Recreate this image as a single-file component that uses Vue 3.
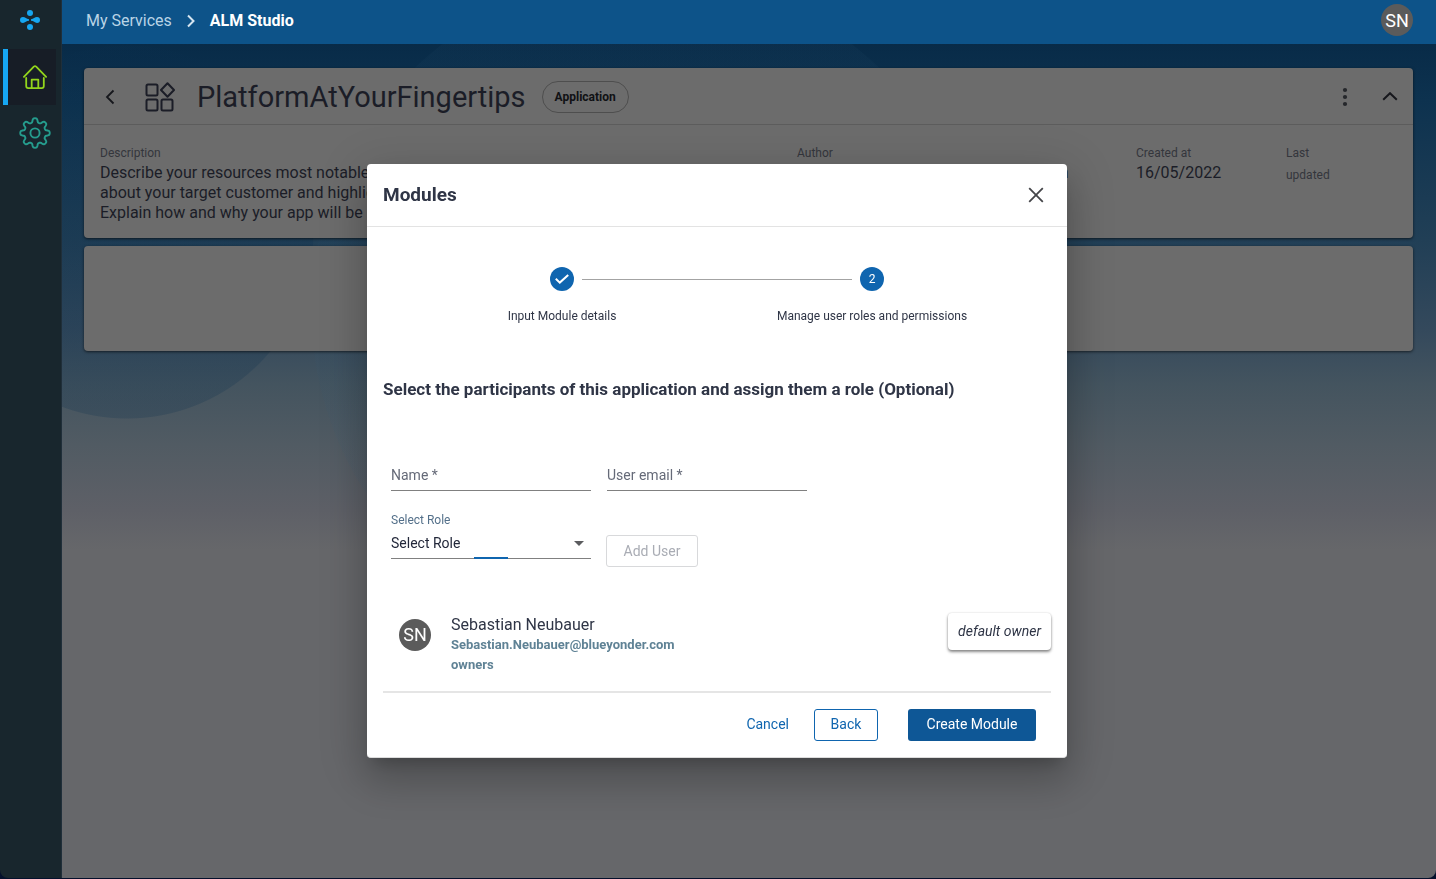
<script setup>
import { ref } from 'vue'

const name = ref('')
const email = ref('')
const role = ref('')

const gearPoints = []
for (let i = 0; i < 160; i++) {
  const a = (i / 160) * Math.PI * 2
  const r = 12.7 + 2.1 * Math.tanh(1.9 * Math.cos(8 * a))
  gearPoints.push(`${(16 + r * Math.cos(a)).toFixed(2)} ${(16 + r * Math.sin(a)).toFixed(2)}`)
}
const gearPath = `M${gearPoints.join('L')}Z`

const steps = [
  { id: 1, label: 'Input Module details', done: true },
  { id: 2, label: 'Manage user roles and permissions', done: false },
]
</script>

<template>
  <div class="app">
    <nav class="sidebar" aria-label="Main">
      <a class="logo" href="#" aria-label="Home page">
        <svg width="20" height="20" viewBox="0 0 20 20" fill="#16a6f0">
          <circle cx="10" cy="3" r="3" />
          <circle cx="10" cy="17" r="3" />
          <path d="M3 7C5.200 7 6.400 9.200 9 9.200V10.800C6.400 10.800 5.200 13 3 13A3 3 0 0 1 3 7Z" />
          <path d="M17 7C14.800 7 13.600 9.200 11 9.200V10.800C13.600 10.800 14.800 13 17 13A3 3 0 0 0 17 7Z" />
        </svg>
      </a>
      <a class="nav-item active" href="#" aria-label="Home">
        <svg width="24" height="24" viewBox="0 0 24 24" fill="none" stroke="#93d51c" stroke-width="1.800" stroke-linecap="round" stroke-linejoin="round">
          <path d="M0.900 11.800L10.800 1.600Q12 0.600 13.200 1.600L23.100 11.800" />
          <path d="M3.200 13V21Q3.200 23.100 5.300 23.100H18.700Q20.800 23.100 20.800 21V13" />
          <path d="M8.700 23V14.600H15.300V23" />
        </svg>
      </a>
      <a class="nav-item" href="#" aria-label="Settings">
        <svg width="32" height="32" viewBox="0 0 32 32" fill="none" stroke="#259c8d" stroke-width="1.900">
          <path :d="gearPath" stroke-linejoin="round" />
          <circle cx="16" cy="16" r="4.600" />
        </svg>
      </a>
    </nav>

    <div class="page">
      <header class="topbar">
        <nav class="crumbs" aria-label="Breadcrumb">
          <a href="#">My Services</a>
          <svg width="8" height="14" viewBox="0 0 8 14" fill="none" stroke="#d5e5f0" stroke-width="2"><path d="M1 1.500L6.500 7L1 12.500" /></svg>
          <strong>ALM Studio</strong>
        </nav>
        <button class="avatar" type="button">SN</button>
      </header>

      <main class="content">
        <section class="card">
          <div class="card-head">
            <button class="icon-btn back-btn" type="button" aria-label="Go back">
              <svg width="10" height="16" viewBox="0 0 10 16" fill="none" stroke="#16171c" stroke-width="1.800"><path d="M8.500 1.500L2 8L8.500 14.500" /></svg>
            </button>
            <svg class="app-icon" width="30" height="30" viewBox="0 0 30 30" fill="none" stroke="#1b1d27" stroke-width="2" stroke-linejoin="round">
              <rect x="1.500" y="2.500" width="11" height="11" rx="1.500" />
              <rect x="1.500" y="17.500" width="11" height="11" rx="1.500" />
              <rect x="16.500" y="17.500" width="11" height="11" rx="1.500" />
              <path d="M22.500 1.200L29 8L22.500 14.800L16 8Z" />
            </svg>
            <h1>PlatformAtYourFingertips</h1>
            <span class="tag">Application</span>
            <button class="icon-btn more-btn" type="button" aria-label="More actions">
              <svg width="6" height="20" viewBox="0 0 6 20" fill="#25272b"><circle cx="3" cy="3" r="2.100" /><circle cx="3" cy="10" r="2.100" /><circle cx="3" cy="17" r="2.100" /></svg>
            </button>
            <button class="icon-btn" type="button" aria-label="Collapse">
              <svg width="16" height="10" viewBox="0 0 16 10" fill="none" stroke="#16171c" stroke-width="2"><path d="M1.200 7.800L8 1.200L14.800 7.800" /></svg>
            </button>
          </div>
          <dl class="details">
            <div>
              <dt>Description</dt>
              <dd>Describe your resources most notable<br />about your target customer and highlight<br />Explain how and why your app will be</dd>
            </div>
            <div>
              <dt>Author</dt>
              <dd>Sebastian.Neubauer@blueyonder.com</dd>
            </div>
            <div>
              <dt>Created at</dt>
              <dd>16/05/2022</dd>
            </div>
            <div>
              <dt class="narrow">Last updated</dt>
            </div>
          </dl>
        </section>
        <section class="card empty" aria-label="Modules"></section>
      </main>
    </div>

    <div class="overlay">
      <div class="dialog" role="dialog" aria-labelledby="dialog-title">
        <header class="dialog-head">
          <h2 id="dialog-title">Modules</h2>
          <button class="icon-btn" type="button" aria-label="Close">
            <svg width="16" height="16" viewBox="0 0 16 16" fill="none" stroke="#444549" stroke-width="1.800"><path d="M1.200 1.200L14.800 14.800M14.800 1.200L1.200 14.800" /></svg>
          </button>
        </header>

        <ol class="stepper">
          <li v-for="step in steps" :key="step.id">
            <span class="dot">
              <svg v-if="step.done" width="14" height="10" viewBox="0 0 14 10" fill="none" stroke="#fff" stroke-width="2"><path d="M0.800 4.800L4.800 8.600L13.200 0.900" /></svg>
              <template v-else>{{ step.id }}</template>
            </span>
            <span class="step-label">{{ step.label }}</span>
          </li>
        </ol>

        <form class="form" @submit.prevent>
          <h3>Select the participants of this application and assign them a role (Optional)</h3>
          <div class="fields">
            <div class="field">
              <label v-show="!name" for="user-name">Name *</label>
              <input id="user-name" v-model="name" type="text" />
            </div>
            <div class="field">
              <label v-show="!email" for="user-email">User email *</label>
              <input id="user-email" v-model="email" type="email" />
            </div>
            <div class="role">
              <label for="user-role">Select Role</label>
              <div class="select-box">
                <select id="user-role" v-model="role">
                  <option value="">Select Role</option>
                </select>
                <svg width="10" height="5" viewBox="0 0 10 5" fill="#5b5c5f"><path d="M0 0H10L5 5Z" /></svg>
                <span class="ripple"></span>
              </div>
            </div>
            <button class="btn add" type="button" disabled>Add User</button>
          </div>
        </form>

        <div class="member">
          <span class="avatar">SN</span>
          <div class="person">
            <span class="person-name">Sebastian Neubauer</span>
            <strong>Sebastian.Neubauer@blueyonder.com</strong>
            <strong>owners</strong>
          </div>
          <em class="owner">default owner</em>
        </div>

        <footer class="actions">
          <button class="btn text" type="button">Cancel</button>
          <button class="btn outline" type="button">Back</button>
          <button class="btn primary" type="button">Create Module</button>
        </footer>
      </div>
    </div>
  </div>
</template>

<style>
body {
  background: #04102c;
}
</style>

<style scoped>
* {
  box-sizing: border-box;
}
.app {
  display: flex;
  min-height: calc(100vh - 1px);
  overflow: hidden;
  border-radius: 0 0 8px 8px;
  font-family: Roboto, "Liberation Sans", sans-serif;
  font-size: 16px;
  line-height: 20px;
  color: #2f3546;
}
h1, h2, h3, dl, dd, ol {
  margin: 0;
  padding: 0;
}
button {
  font-family: inherit;
  cursor: pointer;
}
svg {
  display: block;
}
.sidebar {
  width: 62px;
  flex: none;
  background: #18262d;
  border-right: 1px solid #202f3a;
}
.logo {
  display: flex;
  align-items: center;
  justify-content: center;
  width: 60px;
  height: 40px;
  margin-bottom: 9px;
}
.nav-item {
  display: flex;
  align-items: center;
  justify-content: center;
  width: 53px;
  height: 56px;
  margin-left: 3px;
  padding-left: 5px;
  border-left: 5px solid transparent;
}
.active {
  background: #171d26;
  border-color: #16a8f4;
}
.page {
  display: flex;
  flex: 1;
  flex-direction: column;
  min-width: 0;
}
.topbar {
  display: flex;
  align-items: center;
  justify-content: space-between;
  height: 44px;
  padding: 0 23px 4px 24px;
  background: #0d5389;
}
.crumbs {
  display: flex;
  align-items: center;
  gap: 15px;
  padding-top: 2px;
}
.crumbs a {
  color: #b9d4e6;
  text-decoration: none;
}
.crumbs strong {
  color: #fff;
}
.avatar {
  display: flex;
  align-items: center;
  justify-content: center;
  width: 32px;
  height: 32px;
  padding: 0;
  flex: none;
  border: 0;
  border-radius: 50%;
  background: #5b5b5b;
  color: #fff;
  font-size: 18px;
}
.content {
  display: flex;
  flex: 1;
  flex-direction: column;
  gap: 8px;
  padding: 24px 23px 24px 22px;
  background:
    radial-gradient(circle at 65px 188px, rgba(10, 46, 76, 0.220) 186px, transparent 187px),
    radial-gradient(circle at 585px 266px, rgba(50, 90, 120, 0.080) 335px, transparent 336px),
    linear-gradient(#082b48 0, #0d324f 56px, #213f56 196px, #34495c 286px, #44545f 341px, #515b63 401px, #5e6067 466px, #66676a 506px);
}
.card {
  border-radius: 4px;
  background: #6c6c6c;
  box-shadow: 0 1px 3px rgba(0, 0, 0, 0.600);
}
.empty {
  height: 105px;
}
.card-head {
  display: flex;
  align-items: center;
  height: 57px;
  padding: 2px 7px 0 0;
  border-bottom: 1px solid #5c5c5c;
}
.icon-btn {
  display: flex;
  align-items: center;
  justify-content: center;
  width: 32px;
  height: 32px;
  padding: 0;
  border: 0;
  background: none;
}
.back-btn {
  margin-left: 10px;
}
.app-icon {
  margin: 0 22px 0 19px;
}
h1 {
  font-size: 29px;
  font-weight: 400;
  line-height: 36px;
  color: #1b1d27;
}
.tag {
  display: flex;
  align-items: center;
  height: 32px;
  margin-left: 16px;
  padding: 0 12px;
  border: 1px solid #4e4e4e;
  border-radius: 16px;
  color: #101114;
  font-size: 12px;
  font-weight: 700;
}
.more-btn {
  margin: 0 13px 0 auto;
}
.details {
  display: grid;
  grid-template-columns: 697fr 339fr 150fr 111fr;
  height: 113px;
  padding: 17px 16px 0;
}
.details dt {
  font-size: 12px;
  line-height: 22px;
  color: #34363c;
}
.details dd {
  margin-top: -1px;
  color: #1b1d27;
}
.narrow {
  width: 50px;
}
.overlay {
  position: fixed;
  inset: 44px 2px 1px 0;
  display: flex;
  align-items: center;
  justify-content: center;
}
.dialog {
  width: 700px;
  max-width: 100%;
  padding-bottom: 16px;
  border-bottom: 1px solid #dcdcdc;
  border-radius: 4px;
  background: #fff;
  box-shadow: 0 11px 15px -7px rgba(0, 0, 0, 0.200), 0 24px 38px 3px rgba(0, 0, 0, 0.140), 0 9px 46px 8px rgba(0, 0, 0, 0.120);
}
.dialog-head {
  display: flex;
  align-items: center;
  justify-content: space-between;
  height: 63px;
  padding: 0 15px 0 16px;
  border-bottom: 1px solid #e3e3e3;
}
h2 {
  font-size: 19px;
  font-weight: 700;
}
.stepper {
  display: flex;
  padding: 40px 40px 0;
  list-style: none;
}
.stepper li {
  position: relative;
  display: flex;
  flex: 1;
  flex-direction: column;
  align-items: center;
  gap: 15px;
}
.stepper li + li::before {
  content: "";
  position: absolute;
  top: 12px;
  right: calc(50% + 20px);
  left: calc(-50% + 20px);
  border-top: 1px solid #a3a3a3;
}
.dot {
  display: flex;
  align-items: center;
  justify-content: center;
  width: 24px;
  height: 24px;
  border-radius: 50%;
  background: #0f65af;
  color: #fff;
  font-size: 12px;
}
.step-label {
  font-size: 12px;
}
.form {
  padding: 53px 16px 0;
}
h3 {
  font-size: 17px;
  font-weight: 700;
}
.fields {
  display: grid;
  grid-template-columns: 200px 200px;
  column-gap: 16px;
  padding: 61px 8px 0;
}
.field {
  display: grid;
  height: 31px;
}
.field label,
.field input {
  grid-area: 1 / 1;
}
.field label {
  padding-top: 5px;
  color: #656a78;
  font-size: 14px;
}
.field input {
  width: 100%;
  padding: 0;
  border: 0;
  border-bottom: 1px solid #808080;
  background: none;
  outline: none;
}
.role {
  padding-top: 19px;
}
.role label {
  display: block;
  color: #54708a;
  font-size: 12px;
}
.select-box {
  position: relative;
  height: 29px;
}
.select-box select {
  width: 100%;
  height: 29px;
  padding: 0 24px 2px 0;
  appearance: none;
  border: 0;
  border-bottom: 1px solid #808080;
  border-radius: 0;
  background: none;
  color: #23283a;
  font-family: inherit;
  font-size: 14px;
}
.select-box svg {
  position: absolute;
  top: 11px;
  right: 7px;
}
.ripple {
  position: absolute;
  bottom: 0;
  left: 83px;
  width: 34px;
  height: 2px;
  background: #0f65af;
}
.btn {
  height: 32px;
  padding: 0 15px 2px;
  border: 1px solid transparent;
  border-radius: 3px;
  background: none;
  color: #0f65af;
  font-size: 14px;
}
.add {
  align-self: end;
  justify-self: start;
  width: 92px;
  margin-bottom: -8px;
  margin-left: -1px;
  padding-bottom: 0;
  border-color: #d8d9db;
  color: #a9acb4;
}
.member {
  display: flex;
  align-items: flex-start;
  margin: 54px 16px 0;
  padding-bottom: 16px;
  border-bottom: 2px solid #e5e5e5;
}
.member .avatar {
  margin: 6px 20px 0 16px;
}
.person {
  display: flex;
  flex-direction: column;
  padding-top: 2px;
}
.person strong {
  color: #5f8295;
  font-size: 13px;
}
.owner {
  margin-left: auto;
  padding: 8px 10px 9px;
  border-radius: 4px;
  box-shadow: 0 2px 3px rgba(0, 0, 0, 0.450), 0 0 2px rgba(0, 0, 0, 0.150);
  font-size: 14px;
}
.actions {
  display: flex;
  justify-content: flex-end;
  padding: 16px 31px 0 16px;
}
.text {
  padding: 0 8px 2px;
}
.outline {
  width: 64px;
  margin: 0 30px 0 16px;
  border-color: #0f65af;
}
.primary {
  width: 128px;
  background: #0e5796;
  color: #fff;
}
</style>
